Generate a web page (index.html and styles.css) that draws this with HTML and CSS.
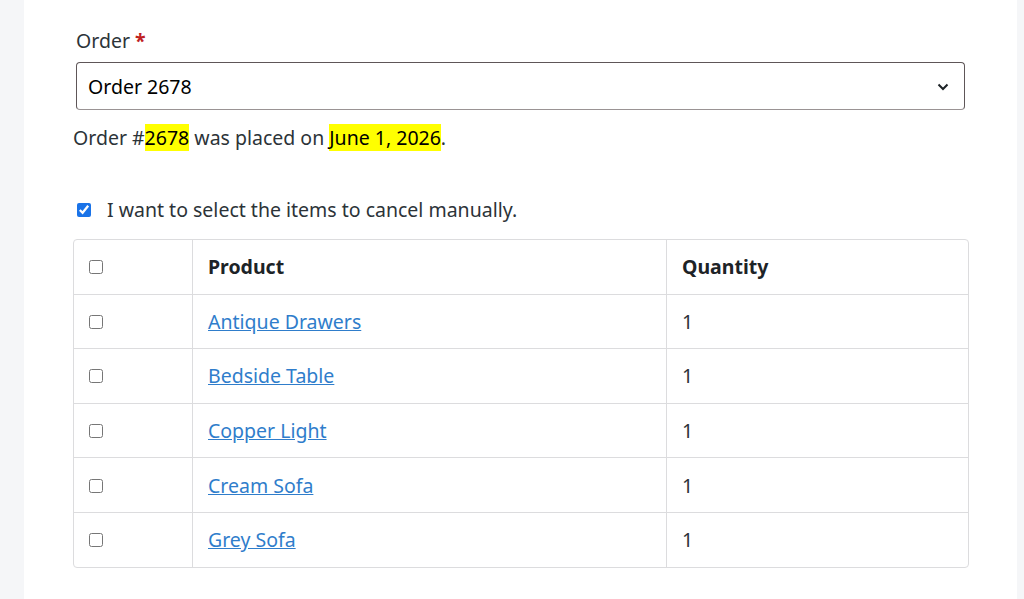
FILE: index.html
```html
<!DOCTYPE html>
<html lang="en">
  <head>
    <meta charset="UTF-8" />
    <meta name="viewport" content="width=device-width, initial-scale=1.0" />
    <title>Cancel Order</title>
    <link rel="stylesheet" href="styles.css">
  </head>
  <body>
    <div class="panel">
      <div class="field">
        <label for="order" class="field-label">Order <span class="required">*</span></label>
        <div class="select-wrap">
          <select id="order" class="order-select">
            <option value="2678">Order 2678</option>
          </select>
          <svg class="select-arrow" width="12" height="8" viewBox="0 0 12 8">
            <path d="M1.5 1.5 L6 6 L10.5 1.5" fill="none" stroke="#1d2327" stroke-width="2" />
          </svg>
        </div>
      </div>
      <p class="order-info">Order #<mark>2678</mark> was placed on <mark>June 1, 2026</mark>.</p>

      <label class="manual-row">
        <input type="checkbox" class="manual-check" checked />
        <span>I want to select the items to cancel manually.</span>
      </label>

      <table class="items-table">
        <thead>
          <tr>
            <th class="col-check"><input type="checkbox" /></th>
            <th>Product</th>
            <th class="col-qty">Quantity</th>
          </tr>
        </thead>
        <tbody>
          <tr>
            <td class="col-check"><input type="checkbox" /></td>
            <td><a href="#">Antique Drawers</a></td>
            <td>1</td>
          </tr>
          <tr>
            <td class="col-check"><input type="checkbox" /></td>
            <td><a href="#">Bedside Table</a></td>
            <td>1</td>
          </tr>
          <tr>
            <td class="col-check"><input type="checkbox" /></td>
            <td><a href="#">Copper Light</a></td>
            <td>1</td>
          </tr>
          <tr>
            <td class="col-check"><input type="checkbox" /></td>
            <td><a href="#">Cream Sofa</a></td>
            <td>1</td>
          </tr>
          <tr>
            <td class="col-check"><input type="checkbox" /></td>
            <td><a href="#">Grey Sofa</a></td>
            <td>1</td>
          </tr>
        </tbody>
      </table>
    </div>
  </body>
</html>
```

FILE: styles.css
```css
body {
  margin: 0;
  background: #f5f6f8;
  font-family: "Noto Sans", "Open Sans", sans-serif;
  color: #2c3338;
}
.panel {
  background: #fff;
  margin: 0 7px 0 24px;
  padding: 27px 48px 32px 49px;
  min-height: 560px;
}
.field {
  margin: 0 4px 0 3px;
}
.field-label {
  display: block;
  font-size: 19.5px;
  line-height: 28px;
  margin-bottom: 7px;
}
.required {
  color: #c0211f;
  font-weight: bold;
}
.select-wrap {
  position: relative;
}
.order-select {
  width: 100%;
  height: 48px;
  appearance: none;
  -webkit-appearance: none;
  background: #fff;
  border: 1px solid #5e5658;
  border-bottom-color: #9a9394;
  border-radius: 4px;
  padding: 0 40px 0 11px;
  font-family: inherit;
  font-size: 19.5px;
  color: #000;
}
.select-arrow {
  position: absolute;
  right: 16px;
  top: 21px;
  pointer-events: none;
}
.order-info {
  font-size: 19.5px;
  line-height: 28px;
  margin: 14px 0 0;
}
mark {
  background: #ffff00;
  color: #000;
}
.manual-row {
  display: flex;
  align-items: center;
  gap: 16px;
  margin: 44px 0 0 4px;
  font-size: 19.5px;
  line-height: 28px;
}
.manual-check {
  margin: 0;
  width: 14px;
  height: 14px;
  accent-color: #1a73e8;
}
.items-table {
  width: 100%;
  margin-top: 15px;
  border-collapse: separate;
  border-spacing: 0;
  border: 1px solid #dcdcde;
  border-radius: 4px;
  font-size: 19.5px;
}
.items-table th,
.items-table td {
  height: 53.6px;
  padding: 0 15px;
  text-align: left;
  border-bottom: 1px solid #dcdcde;
  border-left: 1px solid #dcdcde;
}
.items-table tr > :first-child {
  border-left: none;
}
.items-table tbody tr:last-child td {
  border-bottom: none;
}
.items-table th {
  font-weight: bold;
  color: #1d2327;
}
.items-table .col-check {
  width: 88px;
}
.items-table .col-qty {
  width: 271px;
}
.items-table input[type="checkbox"] {
  margin: 0;
  width: 14px;
  height: 14px;
}
.items-table a {
  color: #2f7dcb;
}
```
